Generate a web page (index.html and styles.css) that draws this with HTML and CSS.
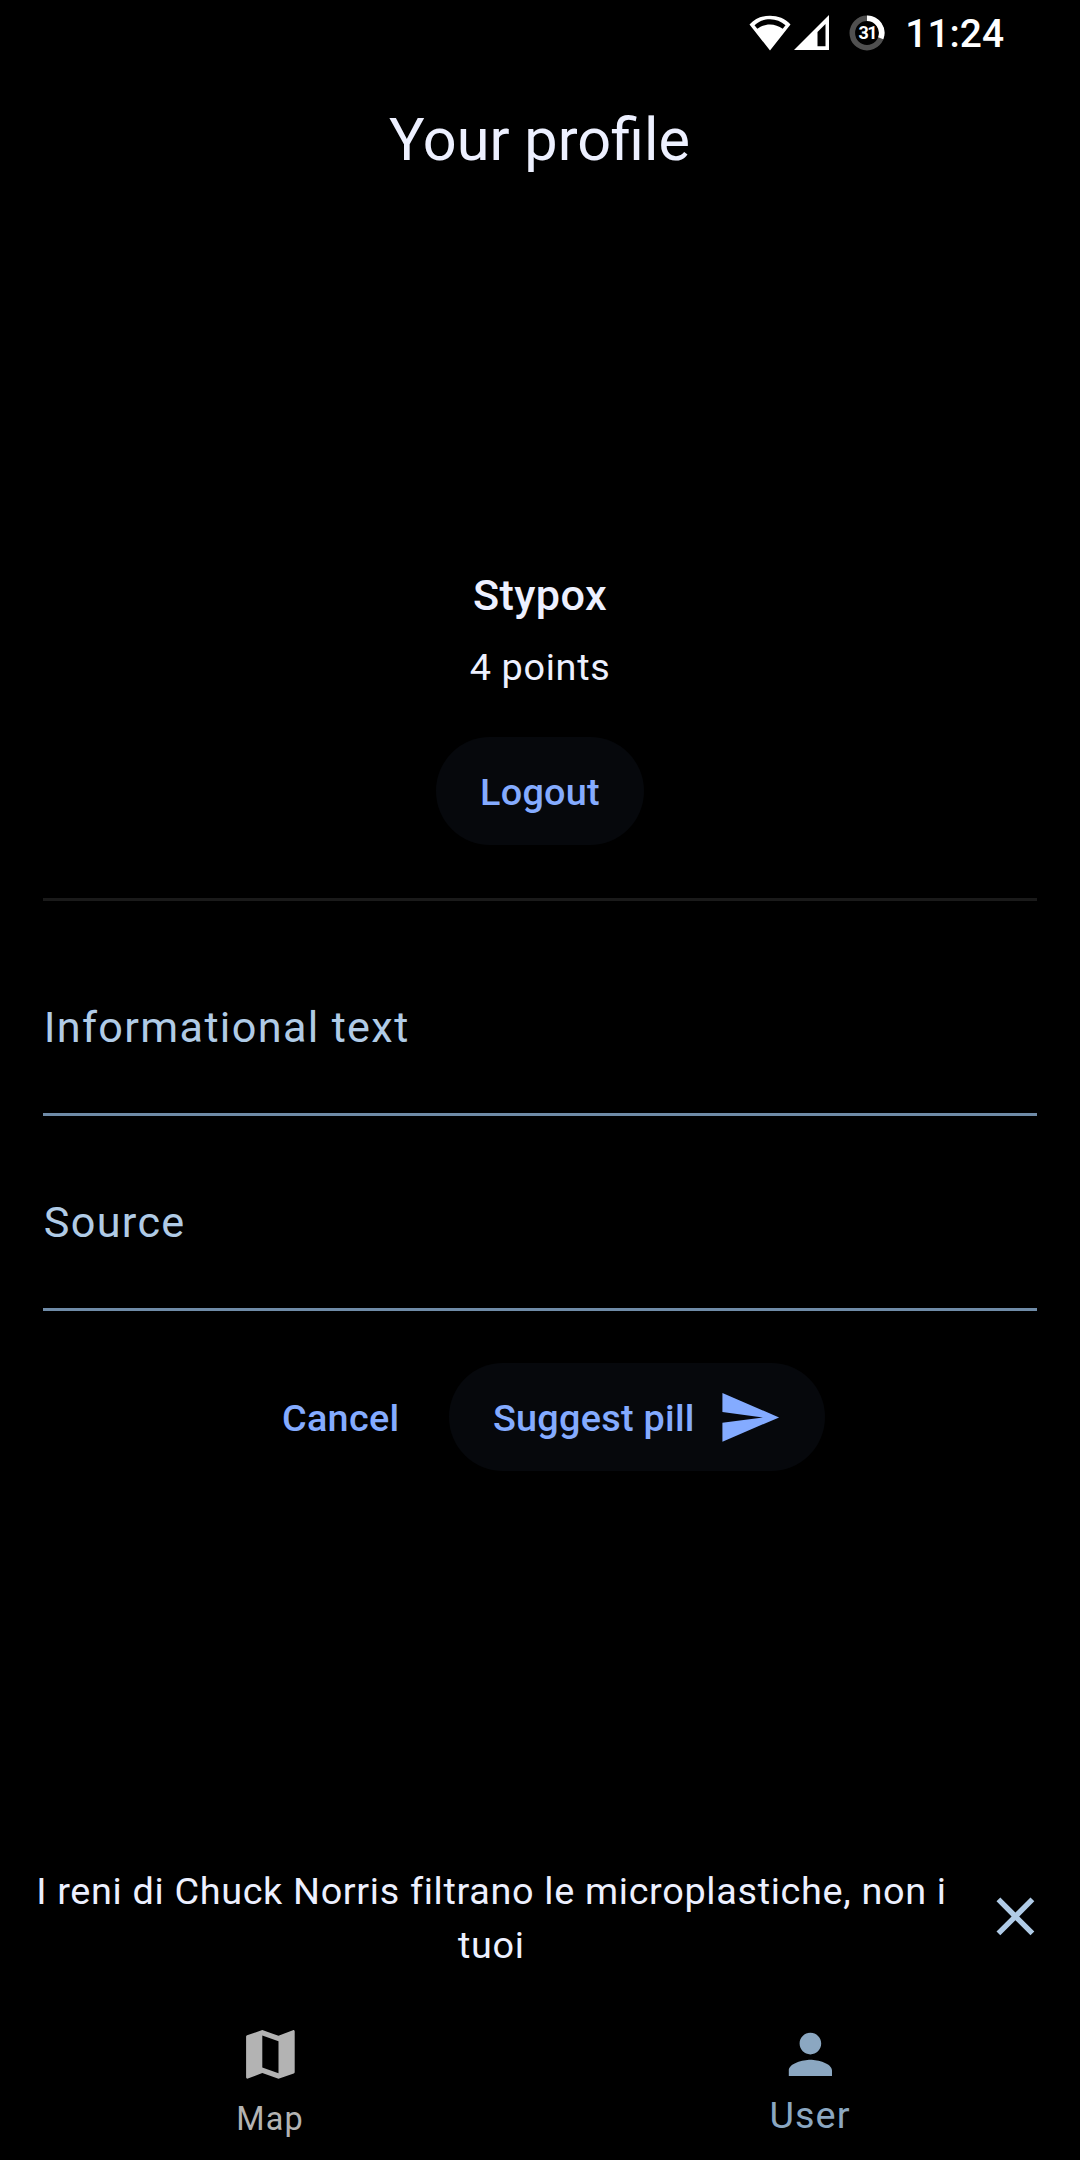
FILE: index.html
```html
<!DOCTYPE html>
<html lang="en">
<head>
<meta charset="utf-8">
<title>Your profile</title>
<link rel="stylesheet" href="styles.css">
</head>
<body>
<div class="screen">
  <div class="status-bar">
    <svg class="wifi" width="42" height="36" viewBox="0 0 42 36">
      <path fill="#fff" fill-rule="evenodd" d="M21 35.500 .5 9.500C6 3.500 13 .8 21 .8S36 3.500 41.500 9.500ZM5.500 10.300 8.300 13.800C12 11 16.500 9.400 21 9.400S30 11 33.700 13.800L36.500 10.300C32 6.200 27 4.200 21 4.200S10 6.200 5.500 10.300Z"/>
    </svg>
    <svg class="signal" width="35" height="35" viewBox="0 0 35 35">
      <path fill="#fff" fill-rule="evenodd" d="M0 35 35 0V35ZM23.500 17V31.300H31.500V9Z"/>
    </svg>
    <div class="battery">
      <svg width="36" height="36" viewBox="0 0 36 36" fill="none" stroke-width="5.600">
        <circle cx="18" cy="18" r="14.700" stroke="#505050"/>
        <path d="M18 3.300A14.700 14.700 0 0 1 31.700 23.300" stroke="#fff"/>
      </svg>
      <span class="battery-level">31</span>
    </div>
    <span class="clock">11:24</span>
  </div>
  <header class="app-bar"><h1 class="title">Your profile</h1></header>
  <main class="content">
    <section class="profile">
      <h2 class="name">Stypox</h2>
      <p class="points">4 points</p>
      <button class="button">Logout</button>
    </section>
    <form class="pill-form">
      <div class="field"><label class="label">Informational text</label></div>
      <div class="field"><label class="label">Source</label></div>
      <div class="actions">
        <button class="text-button" type="button">Cancel</button>
        <button class="button button-icon" type="button"><span class="button-label">Suggest pill</span>
          <svg class="icon" viewBox="0 0 24 24"><path d="M2.010 21 23 12 2.010 3 2 10l15 2-15 2z"/></svg>
        </button>
      </div>
    </form>
  </main>
  <aside class="pill">
    <p class="pill-text">I reni di Chuck Norris filtrano le microplastiche, non i tuoi</p>
    <button class="close"><svg class="icon" viewBox="0 0 24 24"><path d="M19 6.410 17.590 5 12 10.590 6.410 5 5 6.410 10.590 12 5 17.590 6.410 19 12 13.410 17.590 19 19 17.590 13.410 12z"/></svg></button>
  </aside>
  <nav class="nav">
    <a class="tab"><svg class="icon" viewBox="0 0 24 24"><path d="M20.500 3l-.16.03L15 5.100 9 3 3.360 4.900c-.21.07-.36.25-.36.480V20.500c0 .28.220.5.500.5l.16-.03L9 18.900l6 2.100 5.640-1.900c.21-.07.36-.25.36-.480V3.500c0-.28-.22-.5-.5-.5zM15 19l-6-2.110V5l6 2.110V19z"/></svg><span class="tab-label">Map</span></a>
    <a class="tab tab-active"><svg class="icon" viewBox="0 0 24 24"><path d="M12 12c2.210 0 4-1.790 4-4s-1.790-4-4-4-4 1.790-4 4 1.790 4 4 4zm0 2c-2.670 0-8 1.340-8 4v2h16v-2c0-2.660-5.330-4-8-4z"/></svg><span class="tab-label">User</span></a>
  </nav>
</div>
</body>
</html>
```

FILE: styles.css
```css
* { box-sizing: border-box; }
body { margin: 0; background: #000; }
.screen {
  width: 1080px;
  height: 2160px;
  display: flex;
  flex-direction: column;
  overflow: hidden;
  background: #000;
  color: #edf0ff;
  font-family: Roboto, "Liberation Sans", sans-serif;
}
h1, h2, p { margin: 0; font-weight: 400; }
button { margin: 0; padding: 0; border: 0; background: none; font-family: inherit; color: inherit; }
.icon { display: block; width: 64.8px; height: 64.8px; fill: currentColor; flex: none; }

.status-bar {
  height: 65px;
  display: flex;
  justify-content: flex-end;
  align-items: center;
  padding-right: 76px;
  color: #fff;
}
.wifi { margin-right: 3px; }
.signal { margin-right: 20px; }
.battery { position: relative; width: 36px; height: 36px; margin-right: 20px; }
.battery svg { display: block; }
.battery-level {
  position: absolute;
  inset: 0;
  text-align: center;
  font-size: 18px;
  line-height: 35px;
  font-weight: 700;
  letter-spacing: -1.4px;
}
.clock { padding-top: 2px; font-size: 38.9px; line-height: 67px; font-weight: 500; }

.app-bar { height: 151px; display: flex; align-items: center; justify-content: center; padding: 0 1px 2px 0; }
.title { font-size: 59.4px; line-height: 76px; }

.content { flex: 1; padding: 353px 43.2px 0; }
.profile {
  display: flex;
  flex-direction: column;
  align-items: center;
  padding-bottom: 53px;
  border-bottom: 3px solid #1a1a1a;
}
.name { font-size: 43.2px; line-height: 54px; font-weight: 500; letter-spacing: 0.4px; }
.points { margin-top: 17px; font-size: 37.8px; line-height: 54px; letter-spacing: 0.675px; }
.button {
  height: 108px;
  margin-top: 43px;
  padding: 2px 44.2px 0;
  border-radius: 54px;
  background: #06080c;
  color: #84abff;
  font-size: 37.8px;
  font-weight: 500;
  letter-spacing: 0.27px;
}

.pill-form { padding-top: 53px; }
.field {
  height: 162px;
  margin-bottom: 32.6px;
  padding: 46px 0 0 0.5px;
  border-bottom: 3px solid #6f8ba7;
  color: #b0cbe6;
}
.label { display: block; font-size: 43.2px; line-height: 55px; letter-spacing: 1.35px; }
.actions { display: flex; justify-content: center; padding: 20px 5px 0 0; }
.actions .button { margin-top: 0; padding: 0 43.7px 0 44.2px; }
.text-button {
  height: 108px;
  padding: 2px 32.4px 0;
  margin-right: 17px;
  color: #84abff;
  font-size: 37.8px;
  font-weight: 500;
  letter-spacing: 0.27px;
}
.button-icon { display: flex; align-items: center; gap: 22.2px; }
.button-label { padding-top: 2px; }

.pill { height: 130px; display: flex; align-items: center; padding-left: 32.4px; margin-bottom: 20px; }
.pill-text { flex: 1; padding-top: 2px; text-align: center; font-size: 37.8px; line-height: 54px; letter-spacing: 0.675px; }
.close {
  width: 129.6px;
  height: 129.6px;
  padding-bottom: 1px;
  display: flex;
  align-items: center;
  justify-content: center;
  color: #b0cbe6;
}

.nav { height: 158px; display: flex; }
.tab { flex: 1; display: flex; flex-direction: column; align-items: center; padding: 20px 0 0; color: #b3b3b3; }
.tab-label { font-size: 32.4px; line-height: 38px; margin-top: 13px; letter-spacing: 1.08px; }
.tab-active { color: #8ba7c1; }
.tab-active .tab-label { font-size: 37.8px; line-height: 44px; margin-top: 6px; }
```
